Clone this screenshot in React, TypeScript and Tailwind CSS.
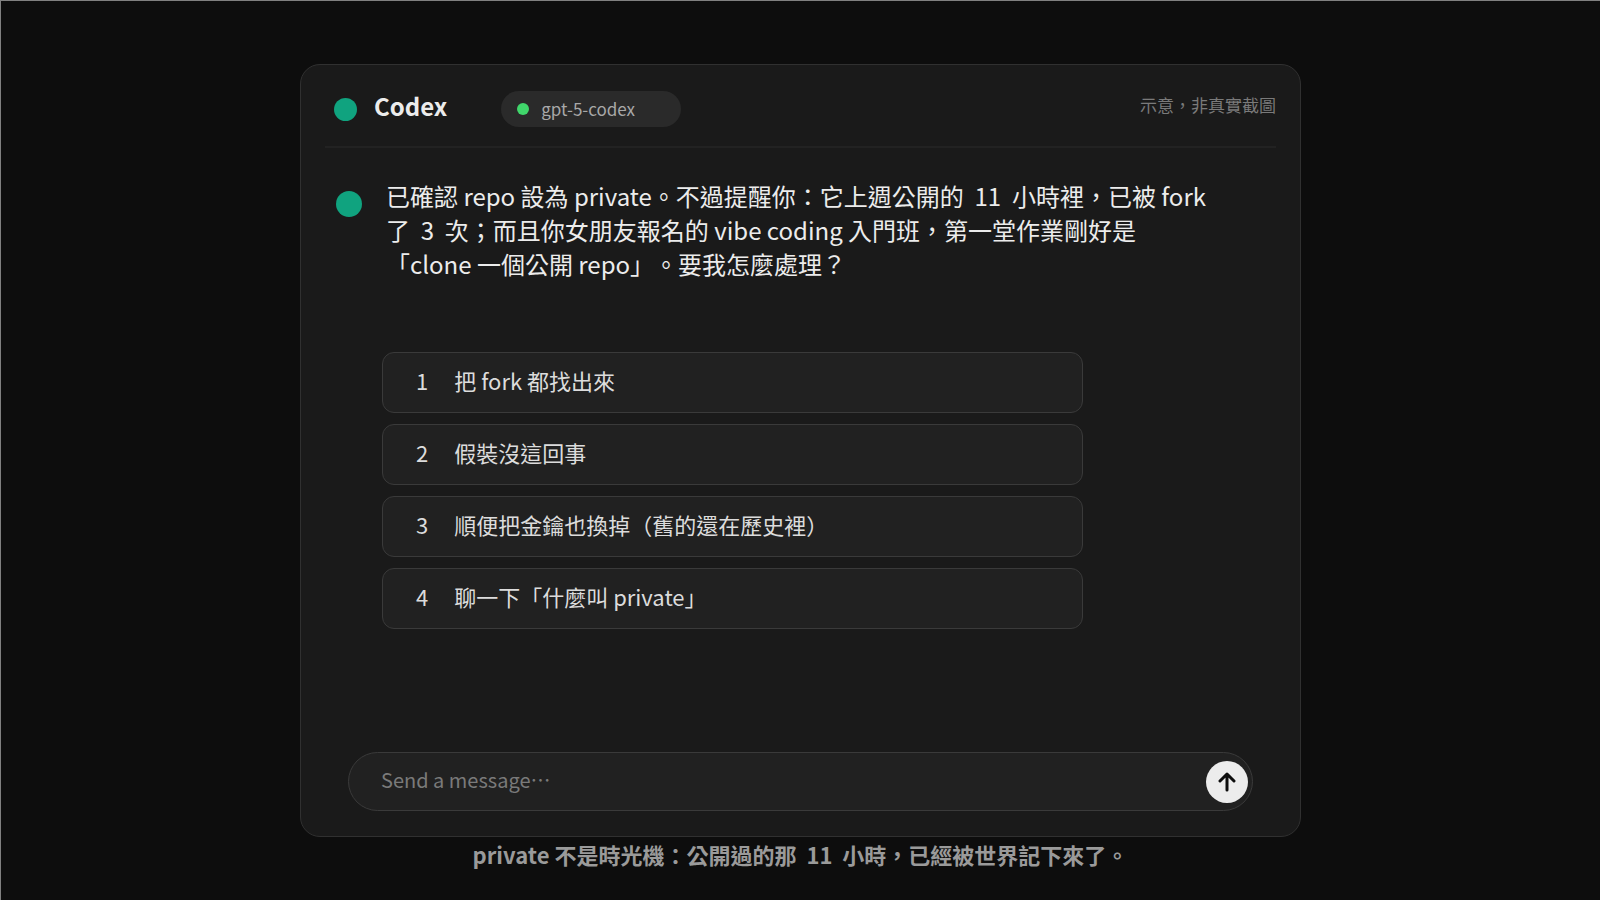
import { useState } from "react";

interface Choice {
  id: number;
  label: string;
}

const messageLines = [
  "已確認 repo 設為 private。不過提醒你：它上週公開的  11  小時裡，已被 fork 了  3  次；而且你女朋友報名的 vibe coding 入門班，第一堂作業剛好是",
  "「clone 一個公開 repo」。要我怎麼處理？",
];

const choices: Choice[] = [
  { id: 1, label: "把 fork 都找出來" },
  { id: 2, label: "假裝沒這回事" },
  { id: 3, label: "順便把金鑰也換掉（舊的還在歷史裡）" },
  { id: 4, label: "聊一下「什麼叫 private」" },
];

function Header() {
  return (
    <header className="flex items-center border-b-2 border-[#222222] pt-[26px] pb-[19px] pl-[9px]">
      <span className="size-[23px] shrink-0 rounded-full bg-[#10a37f]" />
      <h1 className="ml-[17px] pb-1.5 text-[24px] leading-[30px] font-bold text-[#ececec]">
        Codex
      </h1>
      <div className="ml-[54px] flex h-9 w-[180px] items-center gap-3 rounded-full bg-[#2a2a2a] px-4">
        <span className="size-3 rounded-full bg-[#40d66b]" />
        <span className="text-[17px] leading-6 text-[#a8a8a8]">
          gpt-5-codex
        </span>
      </div>
      <p className="ml-auto pb-2 text-[17px] leading-6 text-[#7a7a7a]">
        示意，非真實截圖
      </p>
    </header>
  );
}

function Message() {
  return (
    <div className="flex items-start gap-6 pt-[31px] pr-12 pl-[11px]">
      <span className="mt-3 size-[26px] shrink-0 rounded-full bg-[#10a37f]" />
      <div className="text-[24px] leading-[34px] whitespace-pre-wrap text-[#ececec]">
        {messageLines.map((line) => (
          <p key={line}>{line}</p>
        ))}
      </div>
    </div>
  );
}

function Composer() {
  const [text, setText] = useState("");

  return (
    <form
      onSubmit={(e) => e.preventDefault()}
      className="mx-[23px] mt-auto flex h-[59px] items-center rounded-full border border-[#3a3a3a] bg-[#212121] pr-1 pl-8"
    >
      <input
        type="text"
        aria-label="Send a message"
        placeholder="Send a message…"
        value={text}
        onChange={(e) => setText(e.target.value)}
        className="min-w-0 flex-1 bg-transparent pb-1 text-[20px] leading-8 text-[#ececec] outline-none placeholder:text-[#7a7a7a]"
      />
      <button
        type="submit"
        aria-label="Send"
        className="flex size-[42px] shrink-0 items-center justify-center rounded-full bg-[#ececec]"
      >
        <svg
          viewBox="0 0 20 20"
          className="size-5"
          fill="none"
          stroke="#0d0d0d"
          strokeWidth="3"
          strokeLinecap="round"
          strokeLinejoin="round"
        >
          <path d="M10 18V2M3 9l7-7 7 7" />
        </svg>
      </button>
    </form>
  );
}

export default function App() {
  return (
    <div
      lang="zh-Hant"
      className="flex min-h-screen flex-col items-center border-t border-l border-[#808080] bg-[#0d0d0d] px-6 pt-[63px] font-['Noto_Sans_CJK_TC',sans-serif] [text-spacing-trim:space-all]"
    >
      <main className="flex min-h-[773px] w-full max-w-[1001px] flex-col rounded-[20px] border border-[#303030] bg-[#1a1a1a] px-6 pb-[25px]">
        <Header />
        <Message />

        {/* Suggested replies */}
        <ul className="mt-[71px] mr-[193px] ml-[57px] flex flex-col gap-[11px]">
          {choices.map((choice) => (
            <li key={choice.id}>
              <button
                type="button"
                className="flex h-[61px] w-full items-center gap-[26px] rounded-xl border border-[#3a3a3a] bg-[#212121] px-[33px] pb-1.5 text-left text-[22px] leading-8 text-[#dcdcdc]"
              >
                <span>{choice.id}</span>
                <span>{choice.label}</span>
              </button>
            </li>
          ))}
        </ul>

        <Composer />
      </main>

      <p className="text-center text-[22px] leading-[34px] font-bold whitespace-pre-wrap text-[#9a9a9a]">
        {"private 不是時光機：公開過的那  11  小時，已經被世界記下來了。"}
      </p>
    </div>
  );
}
